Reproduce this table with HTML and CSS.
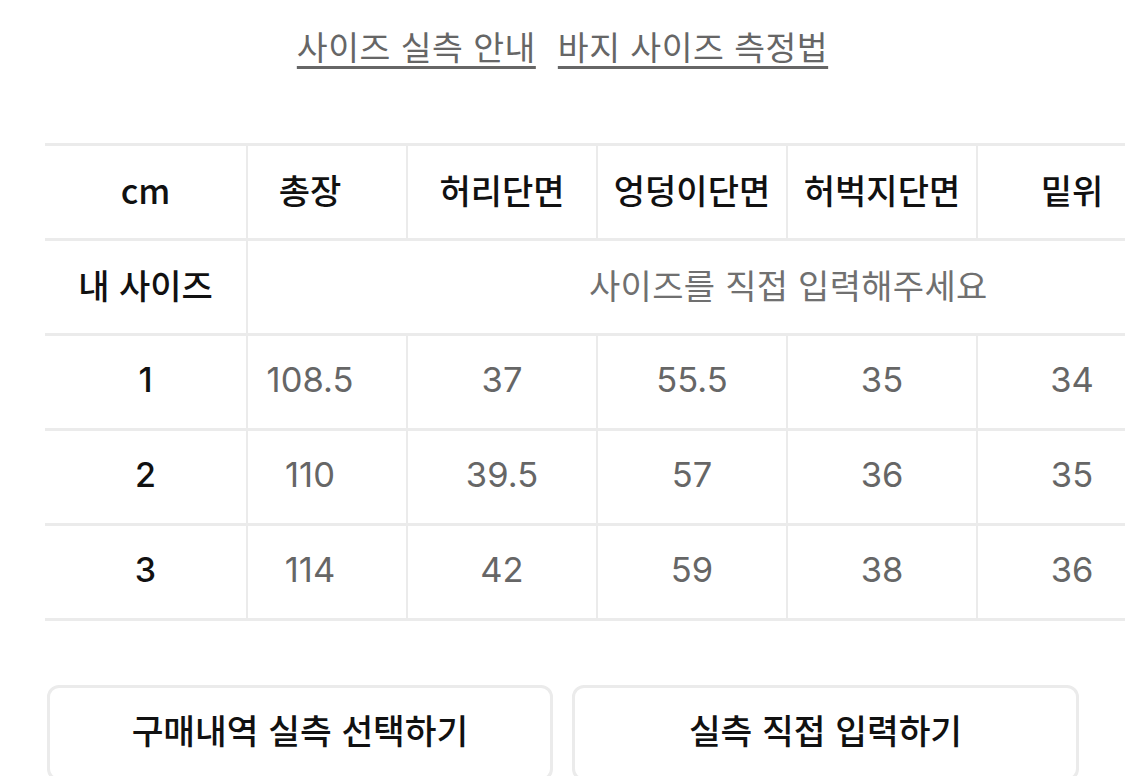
FILE: index.html
```html
<!DOCTYPE html>
<html lang="ko">
<head>
<meta charset="utf-8">
<link rel="stylesheet" href="styles.css">
</head>
<body>
<div class="page">
  <nav class="links">
    <a class="link" href="#">사이즈 실측 안내</a>
    <a class="link" href="#">바지 사이즈 측정법</a>
  </nav>

  <div class="table-wrap">
    <div class="size-table">
      <div class="cell head first">cm</div>
      <div class="cell head c1">총장</div>
      <div class="cell head">허리단면</div>
      <div class="cell head">엉덩이단면</div>
      <div class="cell head">허벅지단면</div>
      <div class="cell head">밑위</div>

      <div class="cell head first">내 사이즈</div>
      <div class="cell mine">사이즈를 직접 입력해주세요</div>

      <div class="cell first num">1</div>
      <div class="cell val c1">108.5</div>
      <div class="cell val">37</div>
      <div class="cell val">55.5</div>
      <div class="cell val">35</div>
      <div class="cell val">34</div>

      <div class="cell first num">2</div>
      <div class="cell val c1">110</div>
      <div class="cell val">39.5</div>
      <div class="cell val">57</div>
      <div class="cell val">36</div>
      <div class="cell val">35</div>

      <div class="cell first num">3</div>
      <div class="cell val c1">114</div>
      <div class="cell val">42</div>
      <div class="cell val">59</div>
      <div class="cell val">38</div>
      <div class="cell val">36</div>
    </div>
  </div>

  <div class="actions">
    <button class="btn" type="button">구매내역 실측 선택하기</button>
    <button class="btn" type="button">실측 직접 입력하기</button>
  </div>
</div>
</body>
</html>
```

FILE: styles.css
```css
html, body {
  margin: 0;
  padding: 0;
  background: #ffffff;
  overflow: hidden;
}

body {
  font-family: "Inter", "Noto Sans CJK KR", sans-serif;
  color: #111111;
}

.page {
  width: 1125px;
}

.links {
  display: flex;
  justify-content: center;
  gap: 22px;
  padding-top: 24px;
  height: 44px;
  line-height: 44px;
}

.link {
  font-family: "Noto Sans CJK KR", sans-serif;
  font-size: 33.5px;
  color: #666666;
  text-decoration: underline;
  text-decoration-thickness: 3px;
  text-underline-offset: 6px;
  letter-spacing: 0.5px;
}

.table-wrap {
  margin-top: 75px;
  margin-left: 45px;
  overflow: hidden;
}

.size-table {
  display: grid;
  grid-template-columns: 203px 160px 190px 190px 190px 190px;
  grid-auto-rows: 95px;
  width: 1123px;
  border-top: 3px solid #ebebeb;
}

.cell {
  box-sizing: border-box;
  display: flex;
  align-items: center;
  justify-content: center;
  border-right: 2px solid #ebebeb;
  border-bottom: 3px solid #ebebeb;
  font-size: 34px;
  padding-bottom: 5px;
}

.head {
  font-family: "Noto Sans CJK KR", sans-serif;
  font-weight: 500;
  color: #111111;
}

.first {
  font-weight: 500;
}

.num {
  font-family: "Inter", "Noto Sans CJK KR", sans-serif;
  font-weight: 500;
  font-size: 34px;
  color: #111111;
}

.c1 {
  padding-right: 34px;
}

.val {
  font-family: "Inter", sans-serif;
  font-size: 34.5px;
  color: #666666;
}

.mine {
  grid-column: span 5;
  justify-content: flex-start;
  padding-left: 341px;
  border-right: none;
  font-family: "Noto Sans CJK KR", sans-serif;
  font-size: 34px;
  letter-spacing: 0.3px;
  color: #707070;
}

.actions {
  display: grid;
  grid-template-columns: 506px 507px;
  gap: 19px;
  margin-top: 64px;
  margin-left: 47px;
}

.btn {
  height: 96px;
  box-sizing: border-box;
  border: 3px solid #ebebeb;
  border-radius: 12px;
  background: #ffffff;
  font-family: "Noto Sans CJK KR", sans-serif;
  font-size: 34.5px;
  font-weight: 500;
  color: #111111;
  padding: 0 0 8px 0;
  cursor: pointer;
}
```
